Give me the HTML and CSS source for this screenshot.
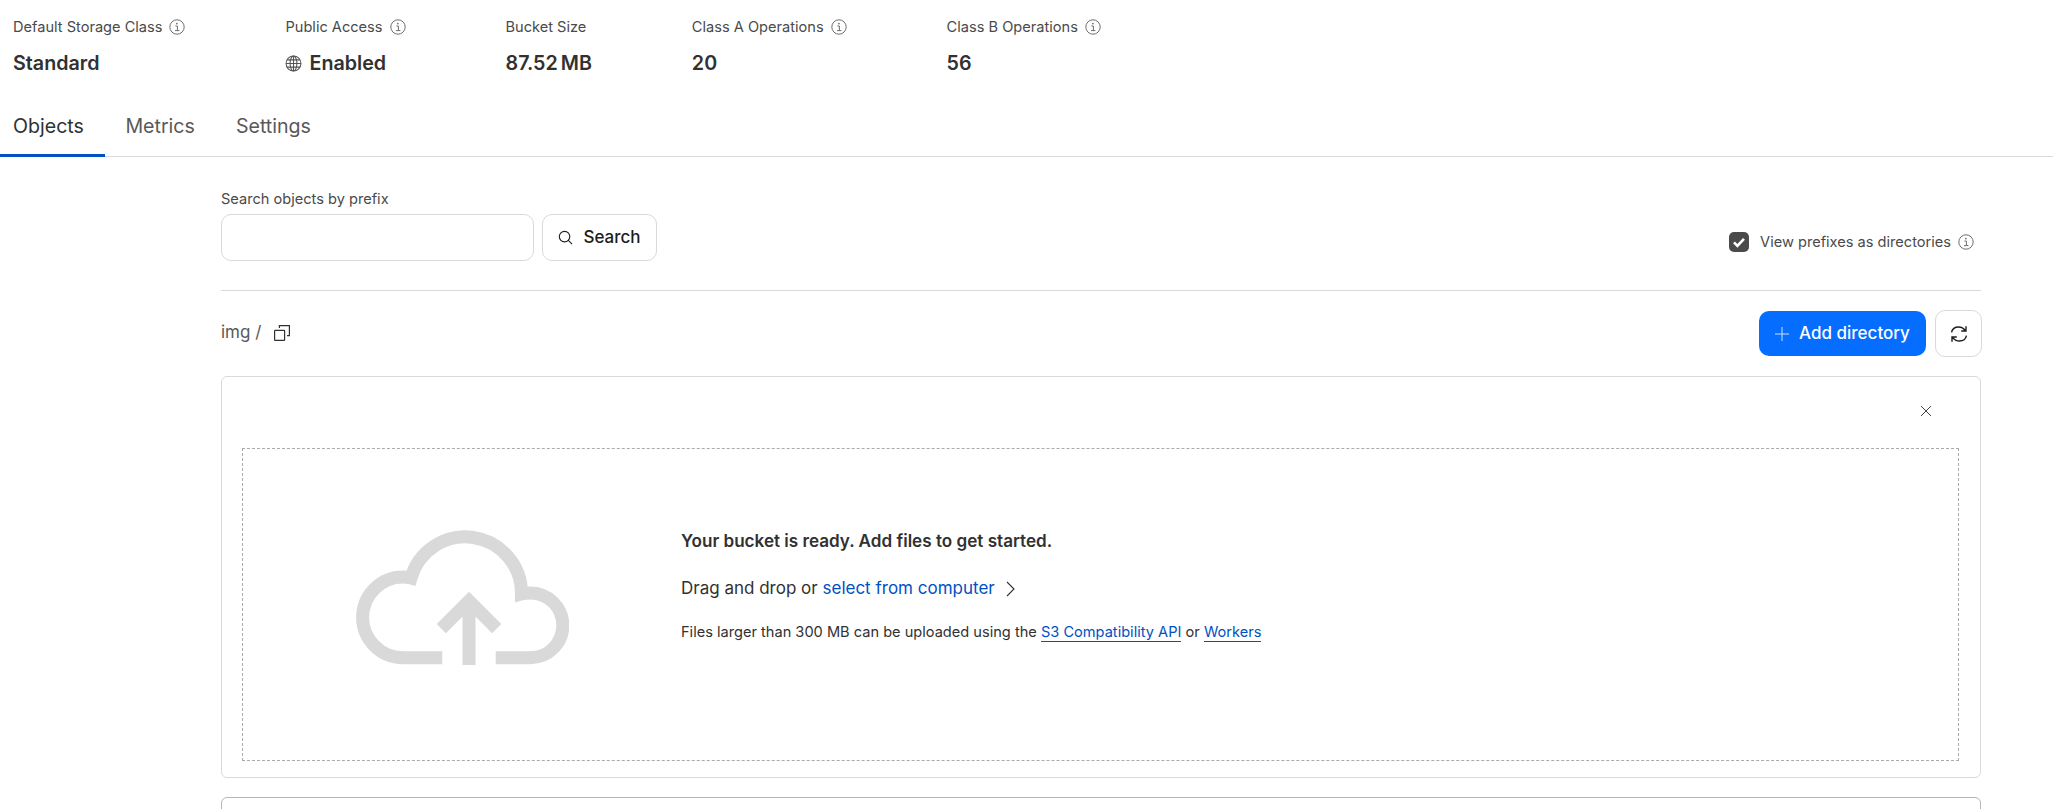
FILE: index.html
```html
<!DOCTYPE html>
<html lang="en">
<head>
  <meta charset="UTF-8">
  <meta name="viewport" content="width=device-width, initial-scale=1.0">
  <title>Bucket</title>
  <link rel="stylesheet" href="styles.css">
</head>
<body>
  <!-- Bucket stats -->
  <div class="stats">
    <div class="stat">
      <div class="stat-label">Default Storage Class
        <svg class="info" viewBox="0 0 16 16"><circle cx="8" cy="8" r="7.2"/><path d="M6.4 7h2v4.6M6 11.6h4.4"/><circle class="dot" cx="7.9" cy="4.6" r="0.9"/></svg>
      </div>
      <div class="stat-value">Standard</div>
    </div>
    <div class="stat">
      <div class="stat-label">Public Access
        <svg class="info" viewBox="0 0 16 16"><circle cx="8" cy="8" r="7.2"/><path d="M6.4 7h2v4.6M6 11.6h4.4"/><circle class="dot" cx="7.9" cy="4.6" r="0.9"/></svg>
      </div>
      <div class="stat-value">
        <svg class="globe" viewBox="0 0 16 16"><circle cx="8" cy="8" r="7"/><ellipse cx="8" cy="8" rx="3.2" ry="7"/><path d="M1 8h14M2 4.6h12M2 11.4h12M8 1v14"/></svg>
        Enabled
      </div>
    </div>
    <div class="stat">
      <div class="stat-label">Bucket Size</div>
      <div class="stat-value">87.52 MB</div>
    </div>
    <div class="stat">
      <div class="stat-label">Class A Operations
        <svg class="info" viewBox="0 0 16 16"><circle cx="8" cy="8" r="7.2"/><path d="M6.4 7h2v4.6M6 11.6h4.4"/><circle class="dot" cx="7.9" cy="4.6" r="0.9"/></svg>
      </div>
      <div class="stat-value">20</div>
    </div>
    <div class="stat">
      <div class="stat-label">Class B Operations
        <svg class="info" viewBox="0 0 16 16"><circle cx="8" cy="8" r="7.2"/><path d="M6.4 7h2v4.6M6 11.6h4.4"/><circle class="dot" cx="7.9" cy="4.6" r="0.9"/></svg>
      </div>
      <div class="stat-value">56</div>
    </div>
  </div>

  <!-- Tabs -->
  <div class="tabs">
    <a class="tab tab-active">Objects</a>
    <a class="tab">Metrics</a>
    <a class="tab">Settings</a>
  </div>

  <div class="content">
    <!-- Search -->
    <div class="search-row">
      <div>
        <label class="search-label">Search objects by prefix</label>
        <div class="search-controls">
          <input class="search-input" type="text">
          <button class="btn btn-search">
            <svg class="search-icon" viewBox="0 0 16 16"><circle cx="7" cy="7" r="5.6"/><path d="M11 11l4 4"/></svg>
            Search
          </button>
        </div>
      </div>
      <div class="view-toggle">
        <span class="checkbox"><svg viewBox="0 0 20 20"><path d="M5 10.4l3.4 3.4L15 6.8"/></svg></span>
        <span>View prefixes as directories</span>
        <svg class="info" viewBox="0 0 16 16"><circle cx="8" cy="8" r="7.2"/><path d="M6.4 7h2v4.6M6 11.6h4.4"/><circle class="dot" cx="7.9" cy="4.6" r="0.9"/></svg>
      </div>
    </div>

    <!-- Path and actions -->
    <div class="path-row">
      <div class="path">
        <span>img /</span>
        <svg class="copy-icon" viewBox="0 0 16 16"><rect x="0.6" y="5.4" width="10" height="10" rx="0.5"/><path d="M5.4 3V0.6h10v10H13"/></svg>
      </div>
      <div class="actions">
        <button class="btn btn-primary">
          <svg class="plus-icon" viewBox="0 0 14 14"><path d="M7 0v14M0 7h14"/></svg>
          Add directory
        </button>
        <button class="btn btn-refresh">
          <svg class="refresh-icon" viewBox="0 0 18 18"><path d="M1.500 7.400C2.200 4.200 5.200 2 8.600 2c2.800 0 5.100 1.300 6.800 3.700M16 1.200v4.800h-4.800M16.500 10.600c-.7 3.200-3.700 5.400-7.100 5.400-2.800 0-5.100-1.300-6.800-3.700M2 16.800V12h4.800"/></svg>
        </button>
      </div>
    </div>

    <!-- Upload card -->
    <div class="card">
      <div class="card-head">
        <svg class="close-icon" viewBox="0 0 10 10"><path d="M0 0l10 10M10 0L0 10"/></svg>
      </div>
      <div class="dropzone">
        <svg class="cloud" viewBox="0 0 213 135"><path d="M86.300 127.700H47A40.350 40.350 0 1 1 47 47c3 0 5 .2 8 1A56.300 56.300 0 0 1 165.500 64c3-.8 6-1 9-1a32.350 32.350 0 0 1 0 64.700H139.700M113 135V71M85.300 98.700L113 71l27.700 27.700"/></svg>
        <div class="drop-text">
          <p class="drop-title">Your bucket is ready. Add files to get started.</p>
          <p class="drop-line">Drag and drop or <a class="drop-link">select from computer</a><svg class="chevron" viewBox="0 0 9 16"><path d="M1 1l7 7-7 7"/></svg></p>
          <p class="drop-note">Files larger than 300 MB can be uploaded using the <a class="note-link">S3 Compatibility API</a> or <a class="note-link">Workers</a></p>
        </div>
      </div>
    </div>

    <!-- Objects table, cut off by the window -->
    <div class="table-card"></div>
  </div>
</body>
</html>
```

FILE: styles.css
```css
html, body {
  height: 809px;
  overflow: hidden;
}

body {
  margin: 0;
  background: #fff;
  color: #313131;
  font-family: Inter, "Noto Sans", sans-serif;
}

p {
  margin: 0;
}

/* Stats */
.stats {
  display: flex;
  gap: 100px;
  padding: 17px 0 0 13px;
}

.stat-label {
  display: flex;
  align-items: center;
  gap: 7px;
  height: 20px;
  font-size: 14.6px;
  line-height: 20px;
  color: #4a4a4a;
}

.stat-value {
  display: flex;
  align-items: center;
  gap: 7px;
  height: 28px;
  margin-top: 12px;
  font-size: 19.7px;
  font-weight: 600;
  line-height: 28px;
  word-spacing: -2px;
}

.info {
  width: 16px;
  height: 16px;
  flex: none;
  fill: none;
  stroke: #6f6f6f;
  stroke-width: 1;
}

.info .dot {
  fill: #6f6f6f;
  stroke: none;
}

.globe {
  width: 17px;
  height: 17px;
  fill: none;
  stroke: #555;
  stroke-width: 1;
}

/* Tabs */
.tabs {
  display: flex;
  height: 60px;
  margin-top: 20px;
  box-sizing: border-box;
  border-bottom: 1px solid #d9d9d9;
}

.tab {
  padding: 15px 20.5px 0;
  font-size: 19.6px;
  line-height: 28px;
  color: #595959;
}

.tab-active {
  height: 60px;
  box-sizing: border-box;
  padding: 15px 21px 0 13px;
  color: #313131;
  border-bottom: 3px solid #0051c3;
}

/* Main column */
.content {
  margin: 0 72px 0 221px;
}

.search-row {
  display: flex;
  justify-content: space-between;
  align-items: flex-end;
  padding: 32px 0 29px;
  border-bottom: 1px solid #d9d9d9;
}

.search-label {
  display: block;
  font-size: 14.6px;
  line-height: 20px;
  color: #4a4a4a;
  margin-bottom: 5px;
}

.search-controls {
  display: flex;
  gap: 8px;
}

.search-input {
  width: 313px;
  height: 47px;
  box-sizing: border-box;
  border: 1px solid #d9d9d9;
  border-radius: 10px;
  background: #fff;
}

.btn {
  display: flex;
  align-items: center;
  justify-content: center;
  box-sizing: border-box;
  height: 47px;
  padding: 0 0 2px;
  border: 1px solid #d9d9d9;
  border-radius: 10px;
  background: #fff;
  color: #1d1d1d;
  font-family: inherit;
  font-size: 17px;
  font-weight: 500;
}

.btn-search {
  width: 115px;
  gap: 10px;
}

.search-icon {
  width: 15px;
  height: 15px;
  margin-top: 2px;
  fill: none;
  stroke: #1d1d1d;
  stroke-width: 1.2;
}

.view-toggle {
  display: flex;
  align-items: center;
  height: 20px;
  margin-bottom: 9px;
  padding-right: 7px;
  font-size: 14.6px;
  color: #4a4a4a;
}

.checkbox {
  width: 20px;
  height: 20px;
  margin-right: 11px;
  border-radius: 5px;
  background: #4a4a4a;
}

.checkbox svg {
  display: block;
  fill: none;
  stroke: #fff;
  stroke-width: 2.6;
}

.view-toggle .info {
  margin-left: 7px;
}

/* Path row */
.path-row {
  display: flex;
  justify-content: space-between;
  align-items: center;
  margin-right: -1px;
  padding: 19px 0;
}

.path {
  display: flex;
  align-items: center;
  gap: 13px;
  font-size: 17px;
  line-height: 24px;
  color: #595959;
  padding-bottom: 3px;
}

.copy-icon {
  width: 16px;
  height: 16px;
  margin-top: 2px;
  fill: none;
  stroke: #313131;
  stroke-width: 1.2;
}

.actions {
  display: flex;
  align-items: center;
  gap: 9px;
}

.btn-primary {
  width: 167px;
  height: 45px;
  gap: 10px;
  border: none;
  background: #056dff;
  color: #fff;
}

.plus-icon {
  width: 14px;
  height: 14px;
  margin-top: 2px;
  fill: none;
  stroke: #cfe1ff;
  stroke-width: 1;
}

.btn-refresh {
  width: 47px;
  padding: 0;
}

.refresh-icon {
  width: 18px;
  height: 18px;
  fill: none;
  stroke: #1d1d1d;
  stroke-width: 1.4;
}

/* Upload card */
.card {
  box-sizing: border-box;
  height: 402px;
  padding: 0 21px 16px 20px;
  border: 1px solid #d9d9d9;
  border-radius: 6px;
  display: flex;
  flex-direction: column;
}

.card-head {
  display: flex;
  justify-content: flex-end;
  height: 71px;
  padding: 29px 28px 0 0;
  box-sizing: border-box;
}

.close-icon {
  width: 10px;
  height: 10px;
  fill: none;
  stroke: #313131;
  stroke-width: 0.9;
}

.dropzone {
  flex: 1;
  display: flex;
  align-items: center;
  padding: 0 0 14px 113px;
  border: 1px dashed #aaa;
}

.cloud {
  width: 213px;
  height: 135px;
  flex: none;
  fill: none;
  stroke: #d9d9d9;
  stroke-width: 13;
}

.drop-text {
  margin-left: 112px;
  margin-bottom: 24px;
}

.drop-title {
  font-size: 17.1px;
  font-weight: 600;
  line-height: 24px;
}

.drop-line {
  margin-top: 23px;
  font-size: 17px;
  line-height: 24px;
}

.drop-link {
  color: #0051c3;
}

.chevron {
  width: 9px;
  height: 16px;
  margin-left: 11px;
  vertical-align: -3px;
  fill: none;
  stroke: #313131;
  stroke-width: 1.1;
}

.drop-note {
  margin-top: 22px;
  font-size: 14.6px;
  line-height: 20px;
}

.note-link {
  color: #0051c3;
  border-bottom: 1px solid #0051c3;
}

/* Table below the fold */
.table-card {
  height: 100px;
  margin-top: 19px;
  border: 1px solid #b5b5b5;
  border-radius: 6px;
}
```
